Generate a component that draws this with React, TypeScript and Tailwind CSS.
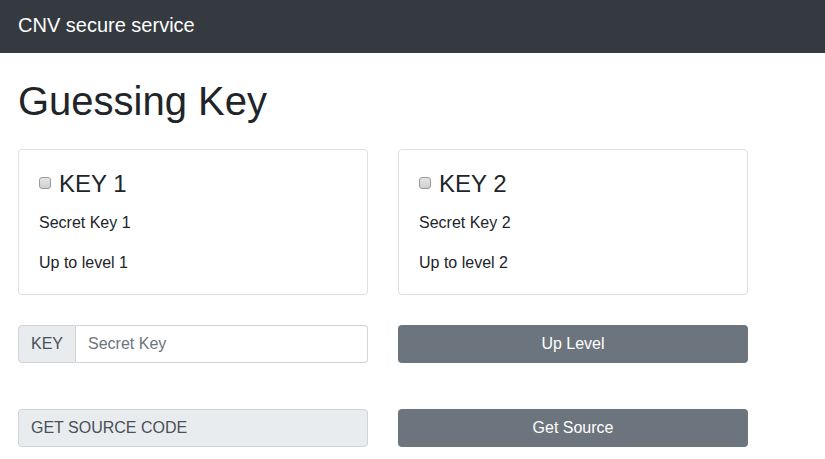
import React from "react";

function KeyCard({ n }: { n: number }) {
  return (
    <div className="w-[350px] h-[146px] border border-[#dfdfdf] rounded-[4px] p-5 bg-white">
      <div className="flex items-center h-[29px] mb-3">
        <input
          type="checkbox"
          className="appearance-none w-[12px] h-[12px] m-0 mr-[8px] mt-[-4px] rounded-[3px] border border-[#9a9a9a] bg-gradient-to-b from-[#e6e6e6] to-[#cfcfcf]"
        />
        <span className="text-[24px] leading-[1.2] text-[#212529]">KEY {n}</span>
      </div>
      <p className="text-[16px] leading-6 text-[#212529] mb-4">Secret Key {n}</p>
      <p className="text-[16px] leading-6 text-[#212529]">Up to level {n}</p>
    </div>
  );
}

export default function App() {
  return (
    <div className="w-[825px] h-[459px] bg-white overflow-hidden" style={{ fontFamily: '"Liberation Sans", Arial, sans-serif' }}>
      <nav className="h-[53px] bg-[#343a40] flex items-center px-[18px] pb-[4px]">
        <span className="text-[20px] text-white leading-[1.5]">CNV secure service</span>
      </nav>
      <div className="px-[18px] pt-6">
        <h1 className="text-[40px] leading-[1.2] text-[#212529] mb-6">Guessing Key</h1>
        <div className="flex gap-[30px]">
          <KeyCard n={1} />
          <KeyCard n={2} />
        </div>
        <div className="flex gap-[30px] mt-[30px]">
          <div className="w-[350px] h-[38px] flex">
            <div className="h-full px-3 flex items-center bg-[#e9ecef] border border-[#ced4da] rounded-l-[4px] text-[16px] text-[#495057]">KEY</div>
            <input
              className="flex-1 h-full px-3 border border-l-0 border-[#ced4da] rounded-r-[4px] text-[16px] text-[#495057] placeholder:text-[#6c757d] outline-none"
              placeholder="Secret Key"
            />
          </div>
          <button className="w-[350px] h-[38px] bg-[#6c757d] rounded-[4px] text-white text-[16px]">Up Level</button>
        </div>
        <div className="flex gap-[30px] mt-[46px]">
          <div className="w-[350px] h-[38px] px-3 flex items-center bg-[#e9ecef] border border-[#ced4da] rounded-[4px] text-[16px] text-[#495057]">GET SOURCE CODE</div>
          <button className="w-[350px] h-[38px] bg-[#6c757d] rounded-[4px] text-white text-[16px]">Get Source</button>
        </div>
      </div>
    </div>
  );
}
